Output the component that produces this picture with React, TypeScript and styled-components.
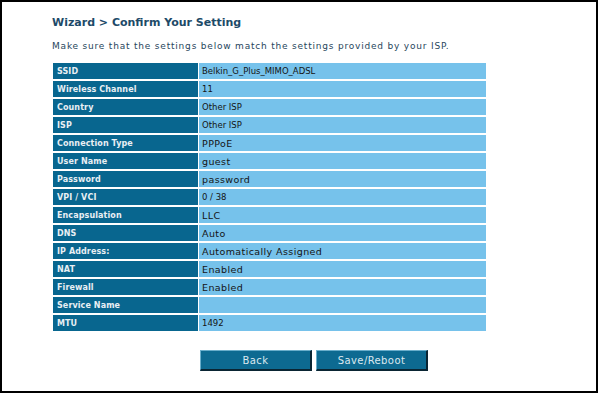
import { Fragment } from 'react';
import styled, { createGlobalStyle } from 'styled-components';

const GlobalStyle = createGlobalStyle`
  body {
    margin: 0;
    background: #ffffff;
  }
`;

const Frame = styled.div`
  width: 598px;
  height: 393px;
  box-sizing: border-box;
  border: 2px solid #000;
  padding: 13px 0 0 50px;
  font-family: 'DejaVu Sans', Verdana, sans-serif;
`;

const Title = styled.h1`
  margin: 0;
  font-size: 11px;
  font-weight: bold;
  color: #1d4a68;
  line-height: 16px;
`;

const Intro = styled.p`
  margin: 9px 0 0;
  font-size: 9px;
  letter-spacing: 0.8px;
  color: #27465c;
  line-height: 13px;
`;

const Grid = styled.div`
  margin: 10px 0 0 1px;
  display: grid;
  grid-template-columns: 145px 287px;
  grid-auto-rows: 16px;
  column-gap: 1px;
  row-gap: 2px;
  width: 433px;
`;

const Label = styled.div`
  background: #08668f;
  color: #e8eff4;
  font-weight: bold;
  font-size: 8px;
  letter-spacing: 0.1px;
  padding-left: 4px;
  display: flex;
  align-items: center;
`;

const Value = styled.div<{ $small?: boolean }>`
  background: #76c2eb;
  color: #141414;
  font-size: ${(p) => (p.$small ? '8.5px' : '9.5px')};
  letter-spacing: ${(p) => (p.$small ? '0' : '0.4px')};
  padding-left: 3px;
  display: flex;
  align-items: center;
`;

const Buttons = styled.div`
  display: flex;
  gap: 4px;
  margin: 19px 0 0 148px;
`;

const Button = styled.button`
  width: 112px;
  height: 21px;
  box-sizing: border-box;
  background: #0d6a91;
  color: #dbe8ef;
  font-family: 'DejaVu Sans', Verdana, sans-serif;
  font-size: 10px;
  letter-spacing: 0.4px;
  border-style: solid;
  border-width: 1px 2px 2px 1px;
  border-color: #6aaecb #0a2533 #0a2533 #6aaecb;
  padding: 0;
`;

const rows: [string, string, boolean][] = [
  ['SSID', 'Belkin_G_Plus_MIMO_ADSL', true],
  ['Wireless Channel', '11', true],
  ['Country', 'Other ISP', true],
  ['ISP', 'Other ISP', true],
  ['Connection Type', 'PPPoE', false],
  ['User Name', 'guest', false],
  ['Password', 'password', false],
  ['VPI / VCI', '0 / 38', true],
  ['Encapsulation', 'LLC', false],
  ['DNS', 'Auto', false],
  ['IP Address:', 'Automatically Assigned', false],
  ['NAT', 'Enabled', false],
  ['Firewall', 'Enabled', false],
  ['Service Name', '', false],
  ['MTU', '1492', true],
];

const App = () => {
  return (
    <>
      <GlobalStyle />
      <Frame>
        <Title>Wizard &gt; Confirm Your Setting</Title>
        <Intro>Make sure that the settings below match the settings provided by your ISP.</Intro>
        <Grid>
          {rows.map(([label, value, small]) => (
            <Fragment key={label}>
              <Label>{label}</Label>
              <Value $small={small}>{value}</Value>
            </Fragment>
          ))}
        </Grid>
        <Buttons>
          <Button>Back</Button>
          <Button>Save/Reboot</Button>
        </Buttons>
      </Frame>
    </>
  );
};

export default App;
